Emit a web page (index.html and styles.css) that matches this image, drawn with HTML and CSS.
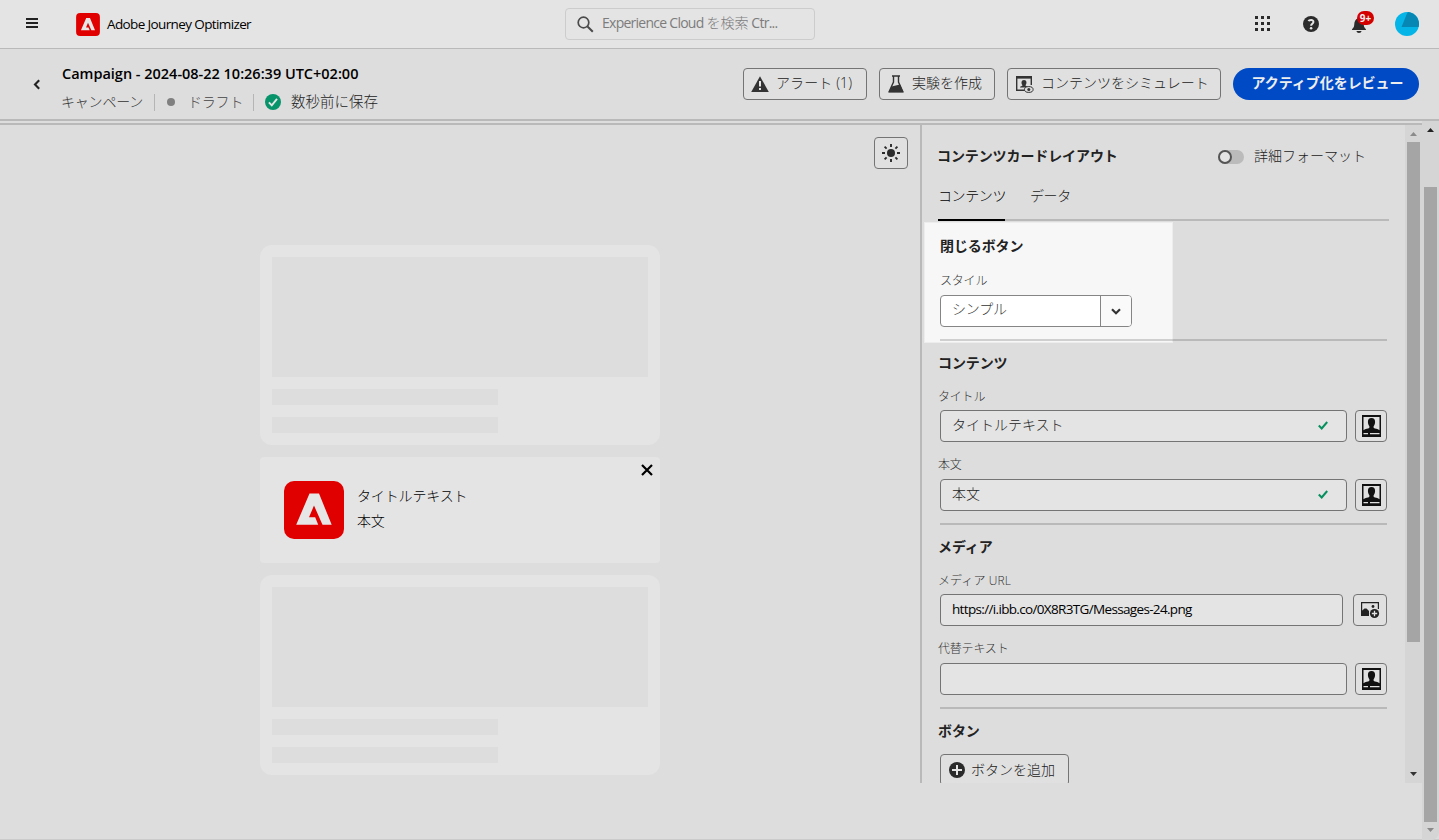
FILE: index.html
```html
<!DOCTYPE html>
<html lang="ja">
<head>
<meta charset="utf-8">
<title>Adobe Journey Optimizer</title>
<link rel="stylesheet" href="styles.css">
</head>
<body>
<svg class="defs" width="0" height="0">
  <symbol id="person" viewBox="0 0 19 22">
    <path fill="#111" fill-rule="evenodd" d="M0 0h19v22H0zM1.500 2v13.300c2-1.800 4.600-1.700 5.600-2.400.5-.5.5-1.300-.1-2.100-.7-1.100-1.100-2.400-1.100-3.800C5.900 4.400 7 3 9.500 3s3.600 1.400 3.600 4c0 1.400-.4 2.700-1.100 3.800-.6.8-.6 1.600-.1 2.100 1 .7 3.600.6 5.600 2.400V2zM1.500 18v1.200h4.500V18zM8 18v1.200h9.500V18z"/>
  </symbol>
  <symbol id="adobe" viewBox="0 0 60 58">
    <rect width="60" height="58" rx="10" fill="#e00000"/>
    <path fill="#e6e6e6" d="M25.500 12.500h9.500L47.700 43.800H38.500L30 24.500 25 36.300h6.200l3 7.500H12.200z"/>
  </symbol>
  <symbol id="check" viewBox="0 0 10 9"><path d="M.8 4.500 3.700 7.500 9.200 1" fill="none" stroke="#07905f" stroke-width="2"/></symbol>
</svg>

<header class="topbar">
  <svg class="menu" width="12" height="11"><path d="M0 1h12M0 5h12M0 9h12" stroke="#222" stroke-width="2"/></svg>
  <svg class="logo" width="24" height="23"><use href="#adobe"/></svg>
  <span class="brand">Adobe Journey Optimizer</span>
  <div class="search">
    <svg width="17" height="17" fill="none" stroke="#4b4b4b"><circle cx="6.500" cy="6.500" r="5.300" stroke-width="1.700"/><path d="m10.500 10.500 5.300 5.300" stroke-width="2"/></svg>
    <span>Experience Cloud <span class="cjk">を検索</span> Ctr...</span>
  </div>
  <div class="tools">
    <svg class="apps" width="15" height="15" fill="#2b2b2b"><path d="M0 0h3v3H0zM6 0h3v3H6zM12 0h3v3h-3zM0 6h3v3H0zM6 6h3v3H6zM12 6h3v3h-3zM0 12h3v3H0zM6 12h3v3H6zM12 12h3v3h-3z"/></svg>
    <svg class="help" width="16" height="16"><circle cx="8" cy="8" r="8" fill="#2b2b2b"/><path d="M5.500 5.200C6 3.800 10.600 3.200 10.400 6c-.1 1.700-2.300 1.700-2.300 3.700" fill="none" stroke="#e6e6e6" stroke-width="2"/><circle cx="8.100" cy="12.300" r="1.300" fill="#e6e6e6"/></svg>
    <div class="bell"><svg width="16" height="17"><path d="M1 14c-.3-1.500 2-1.500 2.200-5C3.400 5.500 4.300 3 6.800 2.500 7 .5 9 .5 9.200 2.500c2.500.5 3.400 3 3.600 6.500.2 3.500 2.500 3.500 2.200 5zM5.500 15h5c0 2.500-5 2.500-5 0" fill="#2b2b2b"/></svg><b>9+</b></div>
    <svg class="avatar" width="24" height="24"><circle cx="12" cy="12" r="12" fill="#05b5e8"/><path d="M6.500 15 12 1.500 13 0A12 12 0 0 1 23.600 15z" fill="#0787b3"/></svg>
  </div>
</header>

<div class="subbar">
  <svg class="back" width="8" height="11"><path d="M6.200 1.200 2 5.500l4.200 4.300" fill="none" stroke="#222" stroke-width="2.100"/></svg>
  <div class="titles">
    <h1>Campaign - 2024-08-22 10:26:39 UTC+02:00</h1>
    <div class="meta">
      <span class="kind">キャンペーン</span><i></i>
      <em></em><span class="draft">ドラフト</span><i></i>
      <svg width="16" height="16"><circle cx="8" cy="8" r="8" fill="#07946a"/><path d="m3.900 8.300 2.900 3.100 5.200-6.500" fill="none" stroke="#e6e6e6" stroke-width="1.900"/></svg>
      <span class="saved">数秒前に保存</span>
    </div>
  </div>
  <div class="actions">
    <button class="btn alert"><svg width="18" height="16"><path d="M9 .3 17.800 16H.2z" fill="#333"/><path d="M9 5v5.500M9 12v2" stroke="#e6e6e6" stroke-width="2"/></svg><span>アラート (1)</span></button>
    <button class="btn flask"><svg width="16" height="18"><path d="M4 1h8M5.500 1v6L1.200 16.500h13.600L10.500 7V1" fill="none" stroke="#333" stroke-width="1.400"/><path d="M3.500 11.500 12 9.500l3.500 8h-15z" fill="#333"/></svg><span>実験を作成</span></button>
    <button class="btn simulate"><svg width="18" height="17"><path d="M9 14.300H.7V1.500h14.600V9" fill="none" stroke="#333" stroke-width="1.400"/><path d="M0 0h16v2.500H0zM4 11.500c0-1.500 2.500-1.300 2.500-2.200C5 7.500 5 4 8 4s3 3.500 1.500 5.300c0 .9 2.500.7 1.500 2.200z" fill="#333"/><ellipse cx="12.800" cy="13.500" rx="4.300" ry="2.900" fill="#ddd" stroke="#333"/><circle cx="12.800" cy="13.500" r="1.500" fill="#333"/></svg><span>コンテンツをシミュレート</span></button>
    <button class="btn primary">アクティブ化をレビュー</button>
  </div>
</div>

<div class="page">
  <div class="workspace">
    <main class="canvas">
      <button class="theme"><svg width="18" height="18" stroke="#2b2b2b" stroke-width="1.900"><circle cx="9" cy="9" r="4" fill="#2b2b2b" stroke="none"/><path d="M9 0v3M9 15v3M0 9h3M15 9h3M2.600 2.600l2 2M13.400 13.400l2 2M15.400 2.600l-2 2M4.600 13.400l-2 2"/></svg></button>
      <div class="cards">
        <div class="skeleton"><div class="image"></div><div class="line"></div><div class="line"></div></div>
        <div class="card">
          <svg width="60" height="58"><use href="#adobe"/></svg>
          <div class="copy"><p>タイトルテキスト</p><p>本文</p></div>
          <svg class="close" width="12" height="12"><path d="m1 1 10 10M11 1 1 11" stroke="#000" stroke-width="2.200"/></svg>
        </div>
        <div class="skeleton"><div class="image"></div><div class="line"></div><div class="line"></div></div>
      </div>
    </main>
    <aside class="panel">
      <div class="panel-head"><h2>コンテンツカードレイアウト</h2><span class="toggle"></span><span class="toggle-label">詳細フォーマット</span></div>
      <nav class="tabs"><a class="active">コンテンツ</a><a>データ</a></nav>
      <section class="close-section">
        <h3>閉じるボタン</h3>
        <label>スタイル</label>
        <div class="select"><span>シンプル</span><div><svg width="10" height="7"><path d="M1 1.200 5 5.200l4-4" fill="none" stroke="#333" stroke-width="2.200"/></svg></div></div>
      </section>
      <section class="content-section">
        <h3>コンテンツ</h3>
        <label>タイトル</label>
        <div class="row"><div class="input"><span>タイトルテキスト</span><svg width="10" height="9"><use href="#check"/></svg></div><button class="icon"><svg width="19" height="22"><use href="#person"/></svg></button></div>
        <label class="second">本文</label>
        <div class="row"><div class="input"><span>本文</span><svg width="10" height="9"><use href="#check"/></svg></div><button class="icon"><svg width="19" height="22"><use href="#person"/></svg></button></div>
      </section>
      <section class="media-section">
        <h3>メディア</h3>
        <label class="wide">メディア URL</label>
        <div class="row media"><div class="input"><span class="url">https://i.ibb.co/0X8R3TG/Messages-24.png</span></div><button class="icon"><svg width="19" height="17"><path d="M.6 14V.6h16.800V7" fill="none" stroke="#222" stroke-width="1.200"/><path d="M0 14V9.500L3.500 6.500h2L8 9v5z" fill="#222"/><circle cx="12" cy="4.500" r="1.400" fill="#222"/><circle cx="13.500" cy="11.500" r="4.600" fill="#222"/><path d="M13.500 8.800v5.400M10.800 11.500h5.400" stroke="#e4e4e4" stroke-width="1.300"/></svg></button></div>
        <label class="second">代替テキスト</label>
        <div class="row"><div class="input"></div><button class="icon"><svg width="19" height="22"><use href="#person"/></svg></button></div>
      </section>
      <section class="button-section">
        <h3>ボタン</h3>
        <button class="add"><svg width="16" height="16"><circle cx="8" cy="8" r="8" fill="#2b2b2b"/><path d="M8 3v10M3 8h10" stroke="#e6e6e6" stroke-width="2"/></svg><span>ボタンを追加</span></button>
      </section>
    </aside>
    <div class="scroll inner"><svg width="7" height="4"><path d="M0 4 3.500 0 7 4z" fill="#8a8a8a"/></svg><div></div><svg width="7" height="4"><path d="M0 0h7L3.500 4z" fill="#333"/></svg></div>
  </div>
  <div class="scroll outer"><svg width="7" height="4"><path d="M0 4 3.500 0 7 4z" fill="#222"/></svg><div></div><svg width="7" height="4"><path d="M0 0h7L3.500 4z" fill="#8a8a8a"/></svg></div>
</div>
</body>
</html>
```
FILE: styles.css
```css
*, *::before { box-sizing: border-box; }
body { margin: 0; width: 1439px; height: 840px; overflow: hidden; background: #ddd; color: #222; font: 300 14px/20px "Open Sans", "Noto Sans CJK JP", sans-serif; }
h1, h2, h3, p { margin: 0; }
svg { display: block; flex: none; }
span, h1, h2, h3, label, a { white-space: nowrap; }
button { font: inherit; color: inherit; padding: 0; background: #e0e0e0; border: 1px solid #747474; border-radius: 4px; display: flex; align-items: center; }
.defs { position: absolute; }

.topbar { height: 49px; background: #e4e4e4; border-bottom: 1px solid #b9b9b9; display: flex; align-items: center; padding: 0 20px 0 26px; }
.menu { margin-bottom: 1px; }
.logo { margin-left: 38px; }
.brand { margin-left: 7px; width: 145px; color: #000; font-weight: 400; font-size: 13.500px; letter-spacing: -.62px; }
.search { margin-left: 313px; width: 250px; height: 32px; border: 1px solid #ccc; border-radius: 4px; display: flex; align-items: center; padding-left: 11px; color: #7c7c7c; font-weight: 400; letter-spacing: -.74px; }
.search > span { margin-left: 8px; padding-bottom: 2px; }
.cjk { font-weight: 300; letter-spacing: 0; }
.tools { margin-left: auto; display: flex; align-items: center; }
.apps { margin-bottom: 1px; }
.help { margin-left: 33px; }
.bell { position: relative; margin-left: 32px; margin-right: 28px; }
.bell b { position: absolute; left: 6px; top: -5px; width: 17px; height: 14px; border-radius: 7px; background: #d40000; color: #eee; font: 700 10px/14px "Open Sans", sans-serif; text-align: center; }

.subbar { height: 72px; border-bottom: 2px solid #b9b9b9; display: flex; padding-left: 33px; padding-right: 20px; }
.back { margin-top: 30px; }
.titles { margin-left: 21px; padding-top: 15px; }
h1 { font-size: 14.500px; line-height: 20px; font-weight: 600; color: #000; letter-spacing: -.01px; }
.meta { display: flex; align-items: center; height: 18px; margin: 9px 0 0 -1px; }
.meta i { width: 1px; height: 17px; background: #b5b5b5; margin: 0 11px; }
.meta i:first-of-type { margin-right: 12px; }
.meta em { width: 8px; height: 8px; border-radius: 50%; background: #808080; margin: 0 13px 0 0; }
.kind { width: 82px; color: #333; letter-spacing: -.2px; }
.draft { width: 54px; color: #444; letter-spacing: -.2px; }
.saved { margin-left: 10px; font-size: 14.500px; }
.actions { margin: 19px 0 0 auto; display: flex; gap: 12px; height: 32px; }
.btn { height: 32px; }
.btn span { padding-bottom: 2px; }
.alert { width: 124px; padding-left: 7px; }
.alert span { margin-left: 7px; letter-spacing: .1px; }
.flask { width: 116px; padding-left: 8px; }
.flask span { margin-left: 8px; }
.simulate { width: 214px; padding-left: 8px; }
.simulate span { margin-left: 7px; }
.primary { width: 186px; border: 0; border-radius: 16px; background: #004bc5; color: #eee; font-weight: 700; justify-content: center; padding: 0 0 2px 3px; letter-spacing: -.05px; }

.page { height: 719px; display: flex; border-bottom: 1px solid #cbcbcb; }
.workspace { width: 1422px; height: 662px; padding-top: 4px; display: flex; background: linear-gradient(#b9b9b9, #b9b9b9) 0 2px / 100% 2px no-repeat; }
.canvas { position: relative; width: 920px; padding-top: 120px; }
.theme { position: absolute; right: 12px; top: 12px; width: 34px; height: 32px; justify-content: center; }
.cards { width: 400px; margin: 0 auto; display: grid; gap: 12px; }
.skeleton { height: 200px; border-radius: 12px; background: #e4e4e4; padding: 12px; }
.image { height: 120px; background: #ddd; }
.line { width: 226px; height: 16px; margin-top: 12px; background: #ddd; }
.card { position: relative; height: 106px; border-radius: 4px; background: #e4e4e4; padding: 24px; display: flex; }
.copy { margin-left: 13px; padding-top: 5px; color: #000; }
.copy p { line-height: 20px; margin-bottom: 5px; letter-spacing: -.15px; }
.close { position: absolute; right: 7px; top: 7px; }

.panel { width: 485px; border-left: 2px solid #b9b9b9; padding-left: 18px; overflow: hidden; }
.panel-head { display: flex; height: 20px; align-items: center; margin: 21px 0 0 -3px; }
h2, h3 { font-size: 14px; line-height: 20px; font-weight: 700; letter-spacing: -.1px; }
h2 { width: 281px; }
.toggle { width: 26px; height: 14px; border-radius: 7px; background: #bbb; margin-top: 2px; }
.toggle::before { content: ""; display: block; width: 14px; height: 14px; border: 2px solid #555; border-radius: 50%; background: #e4e4e4; }
.toggle-label { margin-left: 10px; padding-bottom: 1px; }
.tabs { display: flex; gap: 25px; height: 55px; width: 451px; margin-left: -2px; border-bottom: 2px solid #b9b9b9; }
.tabs a { width: 67px; height: 55px; padding-top: 20px; letter-spacing: -.4px; }
.tabs .active { color: #000; border-bottom: 2px solid #000; }
section { position: relative; width: 447px; }
section:not(.button-section)::after { content: ""; position: absolute; left: 0; right: 0; bottom: 0; height: 2px; background: rgba(0,0,0,.16); }
h3 { margin-left: -2px; }
label { display: block; font-size: 12px; line-height: 16px; margin: 16px 0 5px -2px; color: #333; letter-spacing: -.2px; }
label.second { margin-top: 15px; margin-bottom: 6px; }
label.wide { letter-spacing: .1px; }
.close-section { height: 120px; padding-top: 15px; isolation: isolate; }
.close-section::before { content: ""; position: absolute; z-index: -1; left: -16px; top: 1px; width: 249px; height: 121px; background: #f7f7f7; border: 1px solid #ededed; }
.close-section h3, .close-section label { margin-left: 0; }
.close-section label { margin-top: 17px; margin-bottom: 6px; }
.select { width: 192px; height: 32px; border: 1px solid #858585; border-radius: 4px; background: #fff; display: flex; color: #333; }
.select span { width: 159px; padding: 3px 11px; letter-spacing: -.2px; }
.select div { flex: 1; border-left: 1px solid #858585; display: grid; place-items: center; background: #fafafa; border-radius: 0 3px 3px 0; }
.content-section { height: 184px; padding-top: 12px; }
.row { display: flex; justify-content: space-between; height: 32px; }
.input { width: 407px; height: 32px; border: 1px solid #747474; border-radius: 4px; background: #e4e4e4; display: flex; align-items: center; justify-content: space-between; padding: 0 18px 2px 11px; }
.icon { width: 32px; height: 32px; justify-content: center; }
.media .input { width: 403px; }
.media .icon { width: 34px; }
.url { color: #000; font-weight: 400; font-size: 13.500px; letter-spacing: -.66px; }
.media-section { height: 184px; padding-top: 12px; }
.button-section { padding-top: 12px; }
.add { margin-top: 13px; height: 32px; width: 129px; padding-left: 8px; }
.add span { margin-left: 6px; padding-bottom: 1px; }

.scroll { width: 17px; background: #d5d5d5; display: flex; flex-direction: column; align-items: center; }
.scroll div { width: 13px; background: #a5a5a5; }
.inner { height: 658px; padding-top: 7px; }
.inner div { height: 500px; margin: 6px 0 130px; }
.outer { height: 719px; padding-top: 7px; border-bottom-right-radius: 8px; }
.outer div { height: 635px; margin: 55px 0 6px; }
```
